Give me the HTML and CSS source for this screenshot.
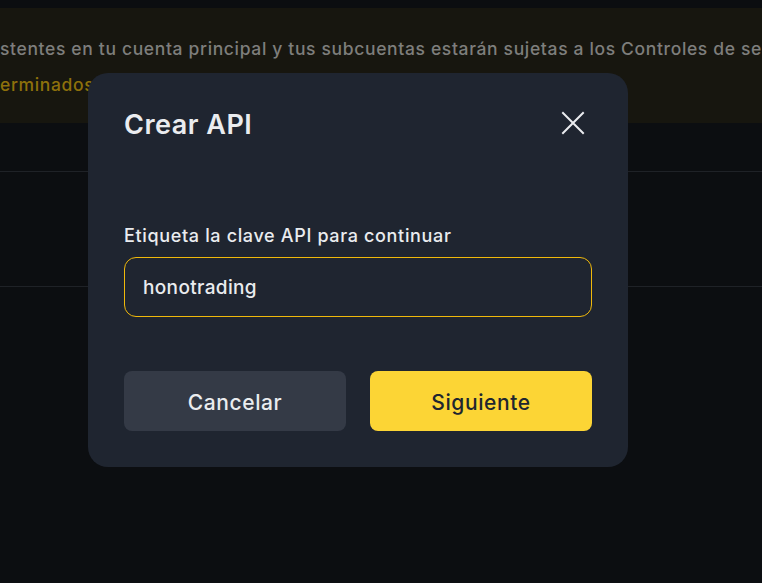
FILE: index.html
```html
<!DOCTYPE html>
<html lang="es">
<head>
<meta charset="utf-8">
<title>Crear API</title>
<link rel="stylesheet" href="styles.css">
</head>
<body>
<div class="page">
  <div class="top-strip"></div>
  <div class="banner">
    <p class="banner-line">stentes en tu cuenta principal y tus subcuentas estarán sujetas a los Controles de seguridad</p>
    <p class="banner-line banner-link">erminados</p>
  </div>
  <div class="row"></div>
  <div class="row row-tall"></div>
</div>

<div class="modal" role="dialog" aria-labelledby="modal-title">
  <div class="modal-header">
    <h2 id="modal-title" class="modal-title">Crear API</h2>
    <button class="close-btn" aria-label="Cerrar">
      <svg width="24" height="24" viewBox="0 0 24 24" fill="none" stroke="#eaecef" stroke-width="2" stroke-linecap="square">
        <path d="M2 2 L22 22 M22 2 L2 22"/>
      </svg>
    </button>
  </div>
  <label class="field-label" for="label-input">Etiqueta la clave API para continuar</label>
  <div class="input-box">
    <input id="label-input" class="text-input" type="text" value="honotrading">
  </div>
  <div class="actions">
    <button class="btn btn-secondary">Cancelar</button>
    <button class="btn btn-primary">Siguiente</button>
  </div>
</div>
</body>
</html>
```
FILE: styles.css
```css
* { box-sizing: border-box; }
html, body { margin: 0; padding: 0; }
body {
  background: #0c0e11;
  font-family: Inter, "Noto Sans", sans-serif;
  width: 762px;
  height: 583px;
  overflow: hidden;
  position: relative;
}
.page { width: 762px; }
.top-strip { height: 8px; background: #0b0d10; }
.banner {
  height: 115px;
  background: #17160f;
  padding-top: 23px;
  overflow: hidden;
  white-space: nowrap;
}
.banner-line {
  margin: 0;
  font-size: 17.5px;
  line-height: 36px;
  letter-spacing: 0.65px;
  color: #7e7e7c;
  font-weight: 500;
}
.banner-link { color: #8e710b; }
.row {
  height: 49px;
  border-bottom: 1px solid #1f2227;
}
.row-tall { height: 115px; }

.modal {
  position: absolute;
  left: 88px;
  top: 73px;
  width: 540px;
  height: 394px;
  background: #1f2530;
  border-radius: 20px;
  padding: 36px;
  display: flex;
  flex-direction: column;
}
.modal-header {
  display: flex;
  align-items: center;
  justify-content: space-between;
  height: 32px;
}
.modal-title {
  margin: 0;
  font-size: 27px;
  line-height: 32px;
  letter-spacing: 0.5px;
  font-weight: 600;
  color: #eaecef;
}
.close-btn {
  background: none;
  border: 0;
  padding: 0;
  width: 24px;
  height: 24px;
  margin-right: 7px;
  margin-top: -4px;
  display: flex;
}
.field-label {
  margin-top: 85px;
  font-size: 18px;
  line-height: 20px;
  letter-spacing: 0.65px;
  font-weight: 500;
  color: #eaecef;
}
.input-box {
  margin-top: 11px;
  height: 60px;
  border: 1px solid #f0b90b;
  border-radius: 12px;
  display: flex;
  align-items: center;
  padding: 0 18px;
}
.text-input {
  border: 0;
  background: transparent;
  outline: none;
  width: 100%;
  font-family: inherit;
  font-size: 19px;
  font-weight: 500;
  letter-spacing: 0.35px;
  color: #eaecef;
  padding: 0;
}
.actions {
  margin-top: 54px;
  display: grid;
  grid-template-columns: 1fr 1fr;
  gap: 24px;
}
.btn {
  height: 60px;
  border: 0;
  border-radius: 8px;
  font-family: inherit;
  font-size: 21px;
  font-weight: 500;
  letter-spacing: 0.6px;
  padding: 3px 0 0;
}
.btn-secondary { background: #343a46; color: #eaecef; }
.btn-primary { background: #fcd535; color: #202630; }
```
